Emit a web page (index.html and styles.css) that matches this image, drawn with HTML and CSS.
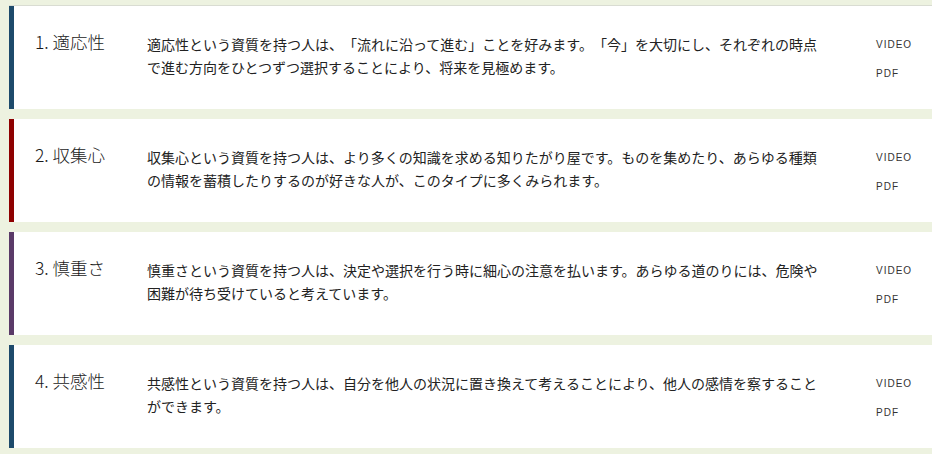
FILE: index.html
```html
<!DOCTYPE html>
<html lang="ja">
<head>
<meta charset="utf-8">
<title>資質一覧</title>
<link rel="stylesheet" href="styles.css">
</head>
<body>
<ul class="list">
  <li class="card card-blue">
    <h3 class="title">1. 適応性</h3>
    <p class="desc">適応性という資質を持つ人は、「流れに沿って進む」ことを好みます。「今」を大切にし、それぞれの時点で進む方向をひとつずつ選択することにより、将来を見極めます。</p>
    <div class="links"><a class="link">VIDEO</a><a class="link">PDF</a></div>
  </li>
  <li class="card card-red">
    <h3 class="title">2. 収集心</h3>
    <p class="desc">収集心という資質を持つ人は、より多くの知識を求める知りたがり屋です。ものを集めたり、あらゆる種類の情報を蓄積したりするのが好きな人が、このタイプに多くみられます。</p>
    <div class="links"><a class="link">VIDEO</a><a class="link">PDF</a></div>
  </li>
  <li class="card card-purple">
    <h3 class="title">3. 慎重さ</h3>
    <p class="desc">慎重さという資質を持つ人は、決定や選択を行う時に細心の注意を払います。あらゆる道のりには、危険や困難が待ち受けていると考えています。</p>
    <div class="links"><a class="link">VIDEO</a><a class="link">PDF</a></div>
  </li>
  <li class="card card-blue">
    <h3 class="title">4. 共感性</h3>
    <p class="desc">共感性という資質を持つ人は、自分を他人の状況に置き換えて考えることにより、他人の感情を察することができます。</p>
    <div class="links"><a class="link">VIDEO</a><a class="link">PDF</a></div>
  </li>
</ul>
</body>
</html>
```
FILE: styles.css
```css
html, body {
  margin: 0;
  padding: 0;
  background: #edf2e0;
}
body {
  font-family: "Noto Sans CJK JP", "Noto Sans", sans-serif;
  color: #222;
}
.list {
  list-style: none;
  margin: 0;
  padding: 6px 0 0 9px;
  display: flex;
  flex-direction: column;
  gap: 10px;
}
.card {
  box-sizing: border-box;
  height: 103px;
  background: #fff;
  border-left: 5px solid #1d4a6b;
  display: grid;
  grid-template-columns: 112px 680px auto;
  column-gap: 0;
  align-items: start;
  padding: 27px 0 0 21px;
}
.card:first-child {
  box-shadow: 0 -1px 0 #d9dcd2;
}
.card-blue { border-left-color: #1d4a6b; }
.card-red { border-left-color: #8e0000; }
.card-purple { border-left-color: #5a3a68; }
.title {
  margin: -3px 0 0;
  font-size: 17.5px;
  font-weight: 300;
  line-height: 23px;
  color: #1a1a1a;
  white-space: nowrap;
}
.desc {
  margin: 0;
  font-size: 14px;
  font-weight: 400;
  line-height: 23px;
  color: #222;
  text-spacing-trim: space-all;
  font-feature-settings: "fwid" 1;
}
.links {
  display: flex;
  flex-direction: column;
  gap: 6px;
  margin-left: 49px;
}
.link {
  font-family: "Liberation Sans", Arial, sans-serif;
  font-size: 10px;
  letter-spacing: 1px;
  line-height: 23px;
  color: #333;
}
```
